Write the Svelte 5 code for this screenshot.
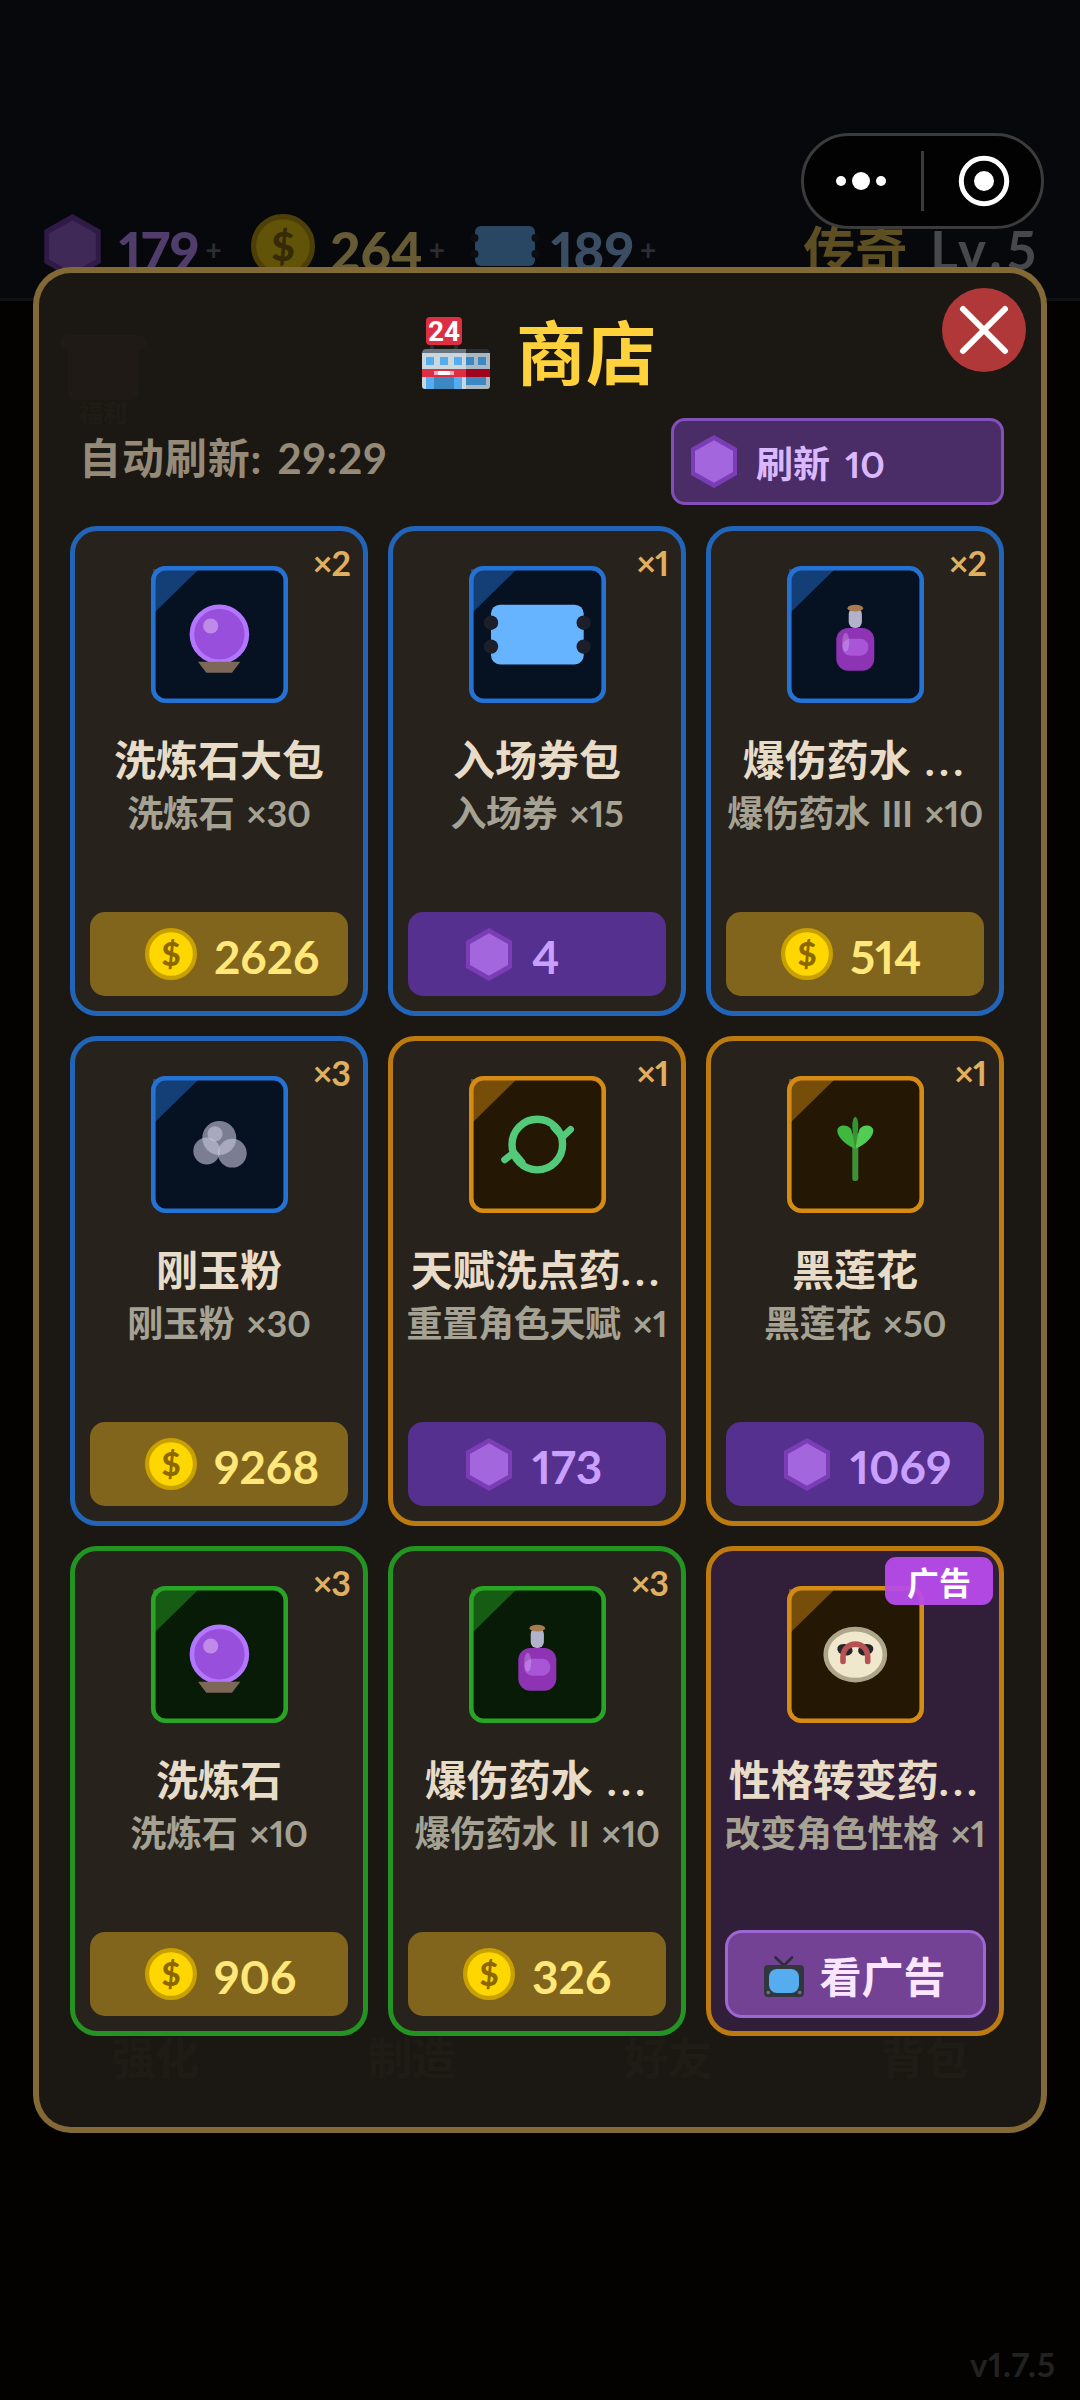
<script lang="ts">
  type Item = {
    name: string;
    cut?: boolean;
    desc: string;
    stock?: number;
    rarity: 'rare' | 'epic' | 'fine';
    icon: string;
    currency?: 'coin' | 'gem';
    price?: number;
    ad?: boolean;
  };

  const items: Item[] = [
    { name: '洗炼石大包', desc: '洗炼石 ×30', stock: 2, rarity: 'rare', icon: 'orb', currency: 'coin', price: 2626 },
    { name: '入场券包', desc: '入场券 ×15', stock: 1, rarity: 'rare', icon: 'ticket', currency: 'gem', price: 4 },
    { name: '爆伤药水 ', cut: true, desc: '爆伤药水 III ×10', stock: 2, rarity: 'rare', icon: 'potion', currency: 'coin', price: 514 },
    { name: '刚玉粉', desc: '刚玉粉 ×30', stock: 3, rarity: 'rare', icon: 'powder', currency: 'coin', price: 9268 },
    { name: '天赋洗点药', cut: true, desc: '重置角色天赋 ×1', stock: 1, rarity: 'epic', icon: 'reset', currency: 'gem', price: 173 },
    { name: '黑莲花', desc: '黑莲花 ×50', stock: 1, rarity: 'epic', icon: 'sprout', currency: 'gem', price: 1069 },
    { name: '洗炼石', desc: '洗炼石 ×10', stock: 3, rarity: 'fine', icon: 'orb', currency: 'coin', price: 906 },
    { name: '爆伤药水 ', cut: true, desc: '爆伤药水 II ×10', stock: 3, rarity: 'fine', icon: 'potion', currency: 'coin', price: 326 },
    { name: '性格转变药', cut: true, desc: '改变角色性格 ×1', rarity: 'epic', icon: 'mask', ad: true }
  ];

  const tabs = ['强化', '制造', '好友', '背包'];
</script>

{#snippet gem(cls: string)}
  <svg class={cls} viewBox="0 0 46 53">
    <polygon points="23,0 46,13 46,40 23,53 0,40 0,13" fill="#7a3db5" />
    <polygon points="23,5.3 42,16 42,37 23,47.7 4,37 4,16" fill="#a366dd" />
  </svg>
{/snippet}

{#snippet coin(cls: string)}
  <svg class={cls} viewBox="0 0 52 52">
    <circle cx="26" cy="26" r="23.9" fill="#ffd700" stroke="#c8a000" stroke-width="4.2" />
    <text x="26" y="38" text-anchor="middle" class="dollar">$</text>
  </svg>
{/snippet}

<div class="screen">
  <!-- 背景のゲーム画面 -->
  <header class="topbar">
    <div class="resources">
      <div class="resource gems">{@render gem('res-gem')}<b>179</b><i>+</i></div>
      <div class="resource coins">{@render coin('res-coin')}<b>264</b><i>+</i></div>
      <div class="resource tickets">
        <svg class="res-ticket" viewBox="0 0 66 40">
          <rect x="3" width="60" height="40" rx="6" fill="#66b3ff" />
          <g fill="#15161c">
            <circle cx="2.5" cy="12" r="4" /><circle cx="2.5" cy="28" r="4" />
            <circle cx="63.5" cy="12" r="4" /><circle cx="63.5" cy="28" r="4" />
          </g>
        </svg>
        <b>189</b><i>+</i>
      </div>
    </div>
    <div class="rank"><span class="rank-name">传奇</span><span>Lv.5</span></div>
  </header>
  <div class="version">v1.7.5</div>

  <div class="capsule">
    <svg viewBox="0 0 243 96">
      <rect x="1.5" y="1.5" width="240" height="93" rx="46.5" fill="#020203" stroke="#3b3b3c" stroke-width="3" />
      <path d="M121.5 18v60" stroke="#3b3b3c" stroke-width="3" />
      <g fill="#fff">
        <circle cx="40" cy="48" r="5" /><circle cx="60" cy="48" r="9" /><circle cx="80" cy="48" r="5" />
        <circle cx="183" cy="48" r="10" />
      </g>
      <circle cx="183" cy="48" r="22.7" fill="none" stroke="#fff" stroke-width="5" />
    </svg>
  </div>

  <section class="shop">
    <div class="ghost">
      <div class="ghost-gift">
        <svg viewBox="0 0 84 66">
          <path d="M7 0h70a7 7 0 0 1 0 16v42a7 7 0 0 1-7 7H14a7 7 0 0 1-7-7V16a7 7 0 0 1 0-16z" />
        </svg>
        <span>福利</span>
      </div>
      <div class="ghost-tabs">
        {#each tabs as tab}<span>{tab}</span>{/each}
      </div>
    </div>

    <button class="close" aria-label="close">
      <svg viewBox="0 0 84 84">
        <circle cx="42" cy="42" r="42" fill="#b03838" />
        <path d="M21 21l42 42M63 21L21 63" stroke="#fff" stroke-width="6" stroke-linecap="round" />
      </svg>
    </button>

    <h1>
      <svg class="store" viewBox="0 0 68 72">
        <path d="M8 26h4v8H8zM32 26h4v8h-4z" fill="#292f33" />
        <rect x="4" width="36" height="28" rx="4" fill="#dd2e44" />
        <text x="22" y="23.5" text-anchor="middle" class="store-num">24</text>
        <path d="M0 37q0-5 4-5h40v5z" fill="#66757f" />
        <path d="M44 32h20q4 0 4 5H44z" fill="#292f33" />
        <path d="M0 36h44v36H3q-3 0-3-3z" fill="#ccd6dd" />
        <path d="M44 36h24v33q0 3-3 3H44z" fill="#aab8c2" />
        <path d="M4 40h8v8H4zM18 40h8v8h-8zM32 40h8v8h-8z" fill="#55acee" />
        <path d="M44 40h8v8h-8zM56 40h8v8h-8zM44 60h20v8H44z" fill="#3b88c3" />
        <path d="M0 52h44v8H0z" fill="#dd2e44" />
        <path d="M44 52h24v8H44z" fill="#a0041e" />
        <path d="M12 54h20v4H12z" fill="#f4abba" />
        <path d="M16 54h12v4H16z" fill="#fff" />
        <path d="M4 60h36v12H4z" fill="#55acee" />
        <path d="M12 60h20v12H12z" fill="#3b88c3" />
      </svg>
      <span>商店</span>
    </h1>

    <div class="toolbar">
      <span class="timer">自动刷新: 29:29</span>
      <button class="refresh">{@render gem('refresh-gem')}<span>刷新 10</span></button>
    </div>

    <div class="grid">
      {#each items as item}
        <article class="card {item.rarity}" class:ad={item.ad}>
          {#if item.ad}
            <span class="badge">广告</span>
          {:else}
            <span class="stock">×{item.stock}</span>
          {/if}

          <svg class="tile" viewBox="0 0 137 137">
            <rect class="tile-box" x="2.3" y="2.3" width="132.4" height="132.4" rx="12" />
            <path class="tile-corner" d="M2 3h46L2 48z" />
            {#if item.icon === 'orb'}
              <circle cx="68.4" cy="68.3" r="27.5" fill="#9850dc" stroke="#b377ff" stroke-width="4.6" />
              <circle cx="59.7" cy="60" r="7.6" fill="#c08ae8" />
              <path d="M47 95.7h42.3L81 106.7H55.3z" fill="#7d6858" />
            {:else if item.icon === 'ticket'}
              <rect x="22" y="38.7" width="92.7" height="59.8" rx="9" fill="#66b3ff" />
              <g fill="#1c1e2a">
                <circle cx="22" cy="56.7" r="7.2" /><circle cx="22" cy="80.6" r="7.2" />
                <circle cx="114.7" cy="56.7" r="7.2" /><circle cx="114.7" cy="80.6" r="7.2" />
              </g>
            {:else if item.icon === 'potion'}
              <rect x="61.7" y="42" width="13.2" height="20" rx="6" fill="#b2b2cb" />
              <ellipse cx="68.3" cy="42.2" rx="7.8" ry="3.4" fill="#a97c50" />
              <rect x="49.3" y="62" width="38" height="42.7" rx="12" fill="#8f33b5" />
              <rect x="55.3" y="72.7" width="26" height="17" rx="8" fill="#a855d8" />
              <ellipse cx="58.7" cy="76.3" rx="3.5" ry="9.5" fill="#fff" opacity="0.22" />
            {:else if item.icon === 'powder'}
              <g fill="#c4c2d8">
                <circle cx="68.3" cy="62" r="17" opacity="0.62" />
                <circle cx="55.7" cy="75" r="13.4" opacity="0.62" />
                <circle cx="81.3" cy="77.2" r="14.4" opacity="0.62" />
                <circle cx="64" cy="57.8" r="7.6" opacity="0.62" />
              </g>
            {:else if item.icon === 'reset'}
              <g fill="none" stroke="#52ca7a" stroke-linecap="round" stroke-linejoin="round">
                <circle cx="68.3" cy="68.6" r="25.3" stroke-width="7.4" />
                <path d="M85 51.5l8.5 9.5 8-7.5M35.7 83.7l9.3-7 8 9.5" stroke-width="7" />
              </g>
            {:else if item.icon === 'sprout'}
              <rect x="65.3" y="56" width="6" height="49" rx="2.5" fill="#3e9136" />
              <ellipse cx="68.3" cy="50.3" rx="3" ry="9.6" fill="#329432" />
              <path d="M68 72.5C58 69 50 60 50.3 54.5C51 48.5 60 48 64 53C66 58 67 66 68 72.5z" fill="#40b840" />
              <path d="M68.6 72.5C78.6 69 86.6 60 86.3 54.5C85.6 48.5 76.6 48 72.6 53C70.6 58 69.6 66 68.6 72.5z" fill="#52cc52" />
            {:else}
              <ellipse cx="68.3" cy="68.6" rx="29.6" ry="25.5" fill="#f0e8cc" stroke="#aea68a" stroke-width="4.6" />
              <ellipse cx="58" cy="63.7" rx="7.8" ry="5.6" fill="#24242c" transform="rotate(14 58 63.7)" />
              <ellipse cx="78.7" cy="63.7" rx="7.8" ry="5.6" fill="#24242c" transform="rotate(-14 78.7 63.7)" />
              <path d="M56 75.5V70.5C56.5 54 80.2 54 80.7 70.5V75.5" fill="none" stroke="#b85252" stroke-width="5.6" stroke-linecap="round" />
            {/if}
          </svg>

          <h2>{item.name}{#if item.cut}<span class="dots">...</span>{/if}</h2>
          <p>{item.desc}</p>

          {#if item.ad}
            <button class="watch">
              <svg class="tv" viewBox="0 0 40 41">
                <path d="M11.5 1.5L20 9.5l8-8" fill="none" stroke="#292f33" stroke-width="2.6" stroke-linecap="round" />
                <rect y="9" width="40" height="32" rx="4" fill="#31373d" />
                <rect x="5" y="13" width="30" height="24" rx="8" fill="#55acee" />
                <circle cx="4.3" cy="36.5" r="1.8" fill="#66757f" /><circle cx="35.7" cy="36.5" r="1.8" fill="#66757f" />
              </svg>
              <span>看广告</span>
            </button>
          {:else}
            <button class="price {item.currency}">
              <span class="price-icon">
                {#if item.currency === 'coin'}{@render coin('price-coin')}{:else}{@render gem('price-gem')}{/if}
              </span>
              <span>{item.price}</span>
            </button>
          {/if}
        </article>
      {/each}
    </div>
  </section>
</div>

<style>
  :global(body) {
    background: #030201;
  }

  .screen {
    position: relative;
    width: 1080px;
    height: 2400px;
    overflow: hidden;
    background: #030201;
    font-family: 'Lato', 'Noto Sans CJK SC', sans-serif;
    font-weight: 700;
    font-variant-numeric: proportional-nums;
  }

  button {
    border: none;
    padding: 0;
    font: inherit;
    font-variant-numeric: inherit;
    box-sizing: border-box;
    cursor: pointer;
  }

  svg {
    display: block;
    flex-shrink: 0;
    overflow: visible;
  }

  /* 上部バー */
  .topbar {
    box-sizing: border-box;
    height: 301px;
    padding: 213px 44px 0;
    display: flex;
    justify-content: space-between;
    background: #07080b;
    border-bottom: 3px solid #0f1014;
  }

  .resources {
    display: flex;
  }

  .resource {
    display: flex;
    align-items: center;
    height: 66px;
  }

  .resource svg {
    opacity: 0.36;
  }

  .resource b {
    font-size: 53px;
    line-height: 66px;
    padding-top: 10px;
  }

  .resource i {
    color: #2c2d2e;
    font-size: 28px;
    font-style: normal;
    padding: 6px 0 0 6px;
  }

  .gems {
    width: 207px;
  }

  .coins {
    width: 221px;
  }

  .gems b {
    color: #513d6c;
    margin-left: 18px;
  }

  .coins b {
    color: #675b36;
    margin-left: 15px;
  }

  .tickets b {
    color: #3b4d62;
    margin-left: 13px;
  }

  .res-gem {
    width: 57px;
    height: 65px;
  }

  .res-coin {
    width: 64px;
    height: 64px;
  }

  .res-ticket {
    width: 66px;
    height: 40px;
  }

  .rank {
    display: flex;
    gap: 23px;
    font-size: 53px;
    line-height: 66px;
    padding-top: 4px;
    margin-right: -5px;
    color: #47484b;
    letter-spacing: 5px;
  }

  .rank-name {
    color: #5e4f22;
    font-size: 52px;
    letter-spacing: 0;
  }

  .version {
    position: absolute;
    right: 24px;
    bottom: 16px;
    font-size: 33px;
    line-height: 40px;
    letter-spacing: 1px;
    color: #222222;
  }

  .capsule {
    position: absolute;
    left: 801px;
    top: 133px;
    width: 243px;
    height: 96px;
  }

  /* ショップのモーダル */
  .shop {
    position: absolute;
    left: 33px;
    top: 267px;
    width: 1014px;
    height: 1866px;
    box-sizing: border-box;
    padding: 0 37px 0 31px;
    border: 6px solid rgba(138, 112, 56, 0.93);
    border-radius: 38px;
    background: #1b1813;
  }

  .ghost {
    position: absolute;
    inset: 0;
    color: #1f1c16;
    font-size: 44px;
  }

  .ghost-gift {
    position: absolute;
    left: 22px;
    top: 62px;
    width: 84px;
    text-align: center;
    font-size: 24px;
    line-height: 24px;
  }

  .ghost-gift svg {
    fill: #1f1a16;
  }

  .ghost-gift span {
    display: block;
  }

  .ghost-tabs {
    position: absolute;
    left: -12px;
    right: -12px;
    bottom: 44px;
    display: flex;
    justify-content: space-around;
    line-height: 50px;
  }

  .close {
    position: absolute;
    left: 903px;
    top: 15px;
    width: 84px;
    height: 84px;
    background: none;
  }

  h1 {
    position: relative;
    margin: 0;
    height: 145px;
    padding: 2px 0 0 4px;
    box-sizing: border-box;
    display: flex;
    align-items: center;
    justify-content: center;
    gap: 26px;
    font-size: 70px;
    line-height: 80px;
    color: #ffd23c;
  }

  .store {
    width: 68px;
    height: 72px;
    margin-top: 12px;
  }

  .store-num {
    font-family: 'Roboto', sans-serif;
    font-size: 28px;
    font-weight: 700;
    fill: #fff;
  }

  h1 span {
    margin-top: 13px;
  }

  .toolbar {
    position: relative;
    height: 87px;
    display: flex;
    align-items: center;
    justify-content: space-between;
    margin-bottom: 21px;
  }

  .timer {
    padding: 0 0 8px 9px;
    font-size: 42px;
    line-height: 46px;
    color: #958a77;
    letter-spacing: 0.9px;
    word-spacing: 4px;
  }

  .refresh {
    width: 333px;
    height: 87px;
    padding-left: 17px;
    display: flex;
    align-items: center;
    gap: 19px;
    background: #4a2d66;
    border: 3px solid #8350b9;
    border-radius: 14px;
    color: #dab8ff;
    font-size: 37px;
    word-spacing: 6px;
  }

  .refresh-gem,
  .price-gem {
    width: 46px;
    height: 53px;
  }

  .grid {
    position: relative;
    display: grid;
    grid-template-columns: repeat(3, 298px);
    grid-auto-rows: 490px;
    gap: 20px;
  }

  .card {
    position: relative;
    box-sizing: border-box;
    display: flex;
    flex-direction: column;
    align-items: center;
    padding-top: 35px;
    border: 5px solid var(--edge);
    border-radius: 27px;
    background: #27221c;
  }

  .rare {
    --edge: #2265b8;
    --tile-edge: #2472d4;
    --tile-bg: #061122;
  }

  .epic {
    --edge: #bd7a10;
    --tile-edge: #d58b14;
    --tile-bg: #241703;
  }

  .fine {
    --edge: #239322;
    --tile-edge: #28a525;
    --tile-bg: #071b06;
  }

  .ad {
    background: #311e38;
  }

  .tile {
    width: 137px;
    height: 137px;
  }

  .tile-box {
    fill: var(--tile-bg);
    stroke: var(--tile-edge);
    stroke-width: 4.6px;
  }

  .tile-corner {
    fill: var(--tile-edge);
    opacity: 0.47;
  }

  .stock {
    position: absolute;
    top: 8px;
    right: 13px;
    font-size: 34px;
    line-height: 48px;
    letter-spacing: -1px;
    color: #e0b060;
  }

  .badge {
    position: absolute;
    top: 6px;
    right: 6px;
    width: 108px;
    height: 48px;
    line-height: 52px;
    text-align: center;
    font-size: 32px;
    color: #fff;
    background: rgba(184, 75, 236, 0.94);
    border-radius: 11px;
  }

  h2 {
    margin: 30px -10px 0;
    font-size: 42px;
    line-height: 54px;
    font-weight: 700;
    color: #e8dcc8;
    white-space: nowrap;
    word-spacing: 4px;
  }

  .dots {
    letter-spacing: 4.2px;
  }

  p {
    margin: 3px -10px 0;
    font-size: 36px;
    line-height: 46px;
    color: #a5a294;
    white-space: nowrap;
    word-spacing: 3px;
    letter-spacing: -0.3px;
  }

  .price {
    width: 258px;
    height: 84px;
    margin-top: auto;
    margin-bottom: 15px;
    padding-left: 55px;
    display: flex;
    align-items: center;
    gap: 17px;
    border-radius: 15px;
    font-size: 46px;
  }

  .price > span:last-child {
    padding-top: 4px;
  }

  .price.coin {
    background: #82651d;
    color: #ffe77a;
  }

  .price.gem {
    background: #55308f;
    color: #c9a0ff;
  }

  .price-icon {
    width: 52px;
    display: flex;
    justify-content: center;
  }

  .price-coin {
    width: 52px;
    height: 52px;
  }

  .dollar {
    font-family: 'Lato', sans-serif;
    font-size: 33px;
    font-weight: 900;
    fill: #8c6800;
  }

  .watch {
    width: 261px;
    height: 88px;
    margin-top: auto;
    margin-bottom: 13px;
    display: flex;
    align-items: center;
    justify-content: center;
    gap: 15px;
    background: #734294;
    border: 3px solid #9b69d1;
    border-radius: 17px;
    color: #fbe6ff;
    font-size: 42px;
  }

  .tv {
    width: 40px;
    height: 41px;
    margin-top: 4px;
  }
</style>
